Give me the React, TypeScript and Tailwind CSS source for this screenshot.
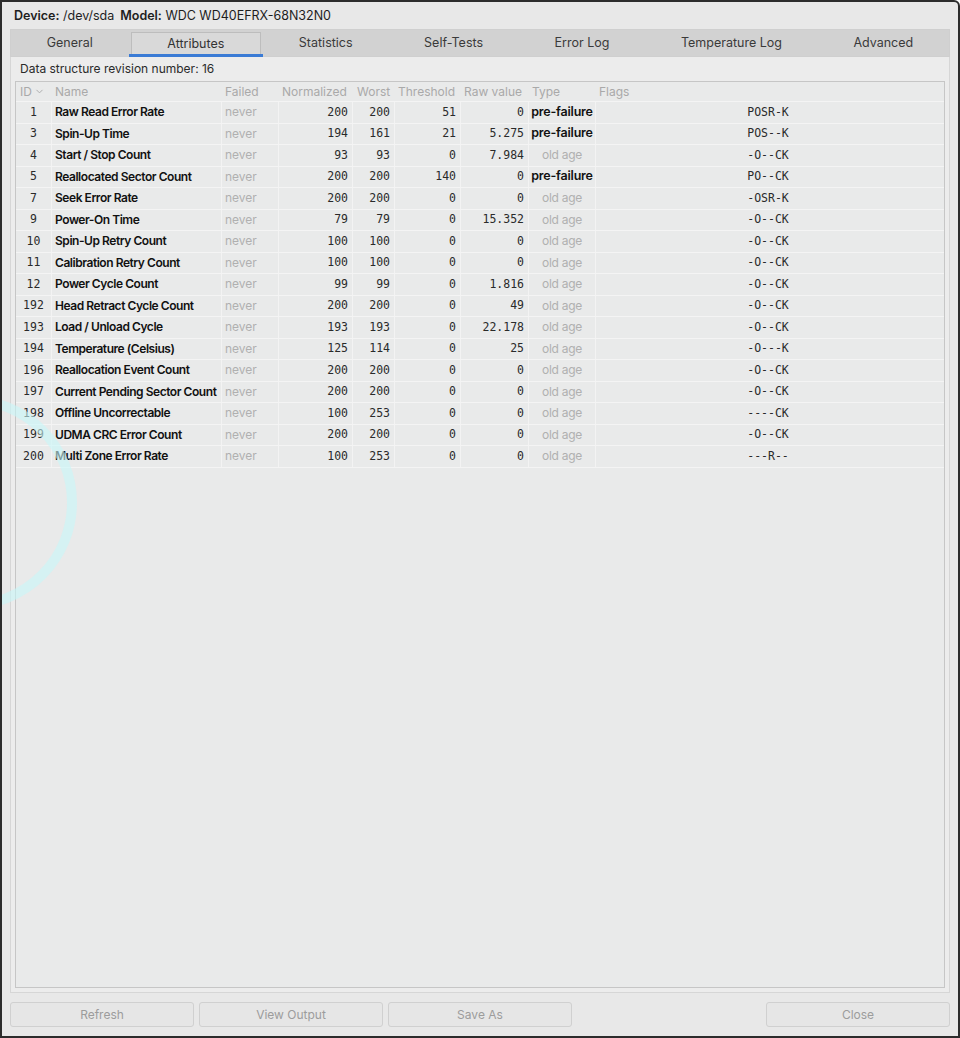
import { ChevronDown } from "lucide-react";

type Attr = {
  id: number;
  name: string;
  norm: number;
  worst: number;
  thresh: number;
  raw: string;
  pre: boolean;
  flags: string;
};

const attrs: Attr[] = [
  { id: 1, name: "Raw Read Error Rate", norm: 200, worst: 200, thresh: 51, raw: "0", pre: true, flags: "POSR-K" },
  { id: 3, name: "Spin-Up Time", norm: 194, worst: 161, thresh: 21, raw: "5.275", pre: true, flags: "POS--K" },
  { id: 4, name: "Start / Stop Count", norm: 93, worst: 93, thresh: 0, raw: "7.984", pre: false, flags: "-O--CK" },
  { id: 5, name: "Reallocated Sector Count", norm: 200, worst: 200, thresh: 140, raw: "0", pre: true, flags: "PO--CK" },
  { id: 7, name: "Seek Error Rate", norm: 200, worst: 200, thresh: 0, raw: "0", pre: false, flags: "-OSR-K" },
  { id: 9, name: "Power-On Time", norm: 79, worst: 79, thresh: 0, raw: "15.352", pre: false, flags: "-O--CK" },
  { id: 10, name: "Spin-Up Retry Count", norm: 100, worst: 100, thresh: 0, raw: "0", pre: false, flags: "-O--CK" },
  { id: 11, name: "Calibration Retry Count", norm: 100, worst: 100, thresh: 0, raw: "0", pre: false, flags: "-O--CK" },
  { id: 12, name: "Power Cycle Count", norm: 99, worst: 99, thresh: 0, raw: "1.816", pre: false, flags: "-O--CK" },
  { id: 192, name: "Head Retract Cycle Count", norm: 200, worst: 200, thresh: 0, raw: "49", pre: false, flags: "-O--CK" },
  { id: 193, name: "Load / Unload Cycle", norm: 193, worst: 193, thresh: 0, raw: "22.178", pre: false, flags: "-O--CK" },
  { id: 194, name: "Temperature (Celsius)", norm: 125, worst: 114, thresh: 0, raw: "25", pre: false, flags: "-O---K" },
  { id: 196, name: "Reallocation Event Count", norm: 200, worst: 200, thresh: 0, raw: "0", pre: false, flags: "-O--CK" },
  { id: 197, name: "Current Pending Sector Count", norm: 200, worst: 200, thresh: 0, raw: "0", pre: false, flags: "-O--CK" },
  { id: 198, name: "Offline Uncorrectable", norm: 100, worst: 253, thresh: 0, raw: "0", pre: false, flags: "----CK" },
  { id: 199, name: "UDMA CRC Error Count", norm: 200, worst: 200, thresh: 0, raw: "0", pre: false, flags: "-O--CK" },
  { id: 200, name: "Multi Zone Error Rate", norm: 100, worst: 253, thresh: 0, raw: "0", pre: false, flags: "---R--" },
];

const tabs = ["General", "Attributes", "Statistics", "Self-Tests", "Error Log", "Temperature Log", "Advanced"];

const cols = "grid grid-cols-[35px_170px_57px_74px_42px_66px_68px_67px_1fr]";
const mono = "font-['DejaVu_Sans_Mono',monospace] text-[11.5px] text-[#2a2a2a]";

export default function App() {
  return (
    <div className="relative h-[1038px] w-[960px] overflow-hidden rounded-tr-[6px] border-2 border-[#2c2c2c] bg-[#e8e8e8] font-['Inter',sans-serif] text-[12.5px] text-[#1e1e1e]">
      <div className="flex h-full flex-col px-[8px]">
        <div className="flex h-[27px] items-center gap-[6px] pl-[4px] pt-[1px] text-[12.5px]">
          <span>
            <b className="font-semibold">Device:</b> /dev/sda
          </span>
          <span>
            <b className="font-semibold">Model:</b> WDC WD40EFRX-68N32N0
          </span>
        </div>

        <div className="flex h-[28px] border border-[#cfcfcf] bg-[#d2d2d2]">
          {tabs.map((t) => (
            <div
              key={t}
              className={
                t === "Attributes"
                  ? "relative mx-[2px] mt-[2px] flex flex-auto items-center justify-center border border-b-0 border-[#bdbdbd] bg-[#d9d9d9] px-[24px] text-[#333]"
                  : "flex flex-auto items-center justify-center px-[24px] text-[#3a3a3a]"
              }
            >
              {t}
              {t === "Attributes" && (
                <div className="absolute bottom-[-1px] left-[-3px] right-[-3px] h-[3px] bg-[#3a7bd5]" />
              )}
            </div>
          ))}
        </div>

        <div className="flex h-[936px] flex-col border border-t-0 border-[#d6d6d6] bg-[#ececec] px-[4px] pb-[4px]">
          <div className="flex h-[24px] items-center pl-[5px] text-[12px] text-[#2a2a2a]">
            Data structure revision number: 16
          </div>
          <div className="flex-1 border border-[#c6c6c6] bg-[#e9eaea]">
            <div className={`${cols} h-[20px] items-center border-b border-[#f4f4f4] text-[12px] text-[#a9a9a9]`}>
              <div className="flex items-center pl-[4px]">
                ID <ChevronDown size={11} className="ml-[2px]" />
              </div>
              <div className="pl-[4px]">Name</div>
              <div className="pl-[4px]">Failed</div>
              <div className="pl-[4px]">Normalized</div>
              <div className="pl-[5px]">Worst</div>
              <div className="pl-[4px]">Threshold</div>
              <div className="pl-[4px]">Raw value</div>
              <div className="pl-[4px]">Type</div>
              <div className="pl-[4px]">Flags</div>
            </div>
            {attrs.map((a) => (
              <div key={a.id} className={`${cols} h-[21.5px] items-center border-b border-[#f4f4f4]`}>
                <div className={`${mono} text-center`}>{a.id}</div>
                <div className="flex h-full items-center whitespace-nowrap border-l border-[#f3f3f3] pl-[3px] text-[12px] font-semibold tracking-[-0.45px] text-[#111]">
                  {a.name}
                </div>
                <div className="flex h-full items-center border-l border-[#f3f3f3] pl-[3px] text-[12px] text-[#b0b0b0]">
                  never
                </div>
                <div className={`${mono} flex h-full items-center justify-end border-l border-[#f3f3f3] pr-[4px]`}>{a.norm}</div>
                <div className={`${mono} flex h-full items-center justify-end border-l border-[#f3f3f3] pr-[4px]`}>{a.worst}</div>
                <div className={`${mono} flex h-full items-center justify-end border-l border-[#f3f3f3] pr-[4px]`}>{a.thresh}</div>
                <div className={`${mono} flex h-full items-center justify-end border-l border-[#f3f3f3] pr-[4px]`}>{a.raw}</div>
                <div
                  className={
                    a.pre
                      ? "flex h-full items-center justify-center whitespace-nowrap border-l border-[#f3f3f3] text-[12.5px] font-semibold tracking-[-0.2px] text-[#111]"
                      : "flex h-full items-center justify-center whitespace-nowrap border-l border-[#f3f3f3] text-[12px] tracking-[-0.3px] text-[#b0b0b0]"
                  }
                >
                  {a.pre ? "pre-failure" : "old age"}
                </div>
                <div className={`${mono} flex h-full items-center justify-center border-l border-[#f3f3f3] pr-[4px]`}>{a.flags}</div>
              </div>
            ))}
          </div>
        </div>

        <div className="flex flex-1 items-start gap-[5px] pt-[9px]">
          {["Refresh", "View Output", "Save As"].map((b) => (
            <div
              key={b}
              className="flex h-[25px] w-[184px] items-center justify-center rounded-[3px] border border-[#d0d0d0] bg-[#e6e6e6] text-[12px] text-[#9c9c9c]"
            >
              {b}
            </div>
          ))}
          <div className="flex-1" />
          <div className="flex h-[25px] w-[184px] items-center justify-center rounded-[3px] border border-[#d0d0d0] bg-[#e6e6e6] text-[12px] text-[#9c9c9c]">
            Close
          </div>
        </div>
      </div>

      {/* wallpaper ring showing through the translucent dialog */}
      <div className="pointer-events-none absolute left-[-150px] top-[393px] h-[215px] w-[225px] rounded-full border-[10px] border-[#c8f6f8] opacity-60" />
    </div>
  );
}
